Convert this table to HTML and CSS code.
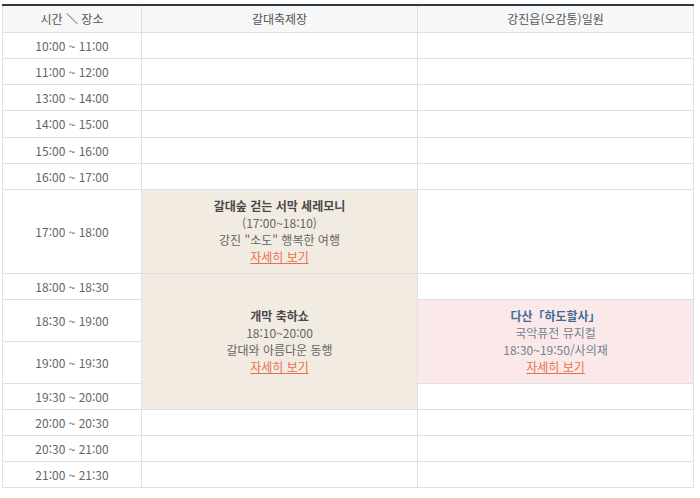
FILE: index.html
```html
<!DOCTYPE html>
<html lang="ko">
<head>
    <meta charset="UTF-8">
    <meta name="viewport" content="width=device-width, initial-scale=1.0">
    <title>행사 일정표</title>
    <link rel="stylesheet" href="styles.css">
</head>
<body>
    <table class="schedule">
        <colgroup>
            <col class="col-time">
            <col class="col-place">
            <col class="col-place">
        </colgroup>
        <thead>
            <tr>
                <th>시간 ＼ 장소</th>
                <th>갈대축제장</th>
                <th>강진읍(오감통)일원</th>
            </tr>
        </thead>
        <tbody>
            <tr><td class="time">10:00 ~ 11:00</td><td></td><td></td></tr>
            <tr><td class="time">11:00 ~ 12:00</td><td></td><td></td></tr>
            <tr><td class="time">13:00 ~ 14:00</td><td></td><td></td></tr>
            <tr class="plus"><td class="time">14:00 ~ 15:00</td><td></td><td></td></tr>
            <tr><td class="time">15:00 ~ 16:00</td><td></td><td></td></tr>
            <tr><td class="time">16:00 ~ 17:00</td><td></td><td></td></tr>
            <tr class="tall">
                <td class="time">17:00 ~ 18:00</td>
                <td class="event beige">
                    <strong>갈대숲 걷는 서막 세레모니</strong>
                    <span>(17:00~18:10)</span>
                    <span>강진 "소도" 행복한 여행</span>
                    <a href="#">자세히 보기</a>
                </td>
                <td></td>
            </tr>
            <tr>
                <td class="time">18:00 ~ 18:30</td>
                <td class="event beige" rowspan="4">
                    <strong>개막 축하쇼</strong>
                    <span>18:10~20:00</span>
                    <span>갈대와 아름다운 동행</span>
                    <a href="#">자세히 보기</a>
                </td>
                <td></td>
            </tr>
            <tr class="mid">
                <td class="time">18:30 ~ 19:00</td>
                <td class="event pink" rowspan="2">
                    <strong>다산「하도할사」</strong>
                    <span>국악퓨전 뮤지컬</span>
                    <span>18:30~19:50/사의재</span>
                    <a href="#">자세히 보기</a>
                </td>
            </tr>
            <tr class="mid"><td class="time">19:00 ~ 19:30</td></tr>
            <tr><td class="time">19:30 ~ 20:00</td><td></td></tr>
            <tr><td class="time">20:00 ~ 20:30</td><td></td><td></td></tr>
            <tr><td class="time">20:30 ~ 21:00</td><td></td><td></td></tr>
            <tr><td class="time">21:00 ~ 21:30</td><td></td><td></td></tr>
        </tbody>
    </table>
</body>
</html>
```

FILE: styles.css
```css
* {
    margin: 0;
    padding: 0;
    box-sizing: border-box;
}

body {
    padding: 4px 6px 0 2px;
    background: #fff;
    font-family: "Noto Sans CJK KR", "Noto Sans", sans-serif;
    font-size: 12px;
    color: #666;
}

.schedule {
    width: 692px;
    border-collapse: collapse;
    table-layout: fixed;
    border-top: 2px solid #2c3b48;
}

.col-time {
    width: 139px;
}

.schedule th,
.schedule td {
    border: 1px solid #e0e0e0;
    text-align: center;
    vertical-align: middle;
    height: 26px;
    line-height: 17px;
}

.schedule th {
    height: 27px;
    background: #f7f7f7;
    font-weight: normal;
    color: #555;
    border-top: none;
}

.schedule tr.plus td {
    height: 27px;
}

.schedule tr.tall td {
    height: 84px;
}

.schedule tr.mid td {
    height: 42px;
}

.event strong,
.event span,
.event a {
    display: block;
}

.event strong {
    font-weight: bold;
    color: #484848;
}

.event a {
    color: #e8714a;
    text-decoration: underline;
    width: fit-content;
    margin: 0 auto;
}

.beige {
    background: #f1ebe2;
}

.pink {
    background: #fbe9e9;
    color: #728292;
}

.pink strong {
    color: #3f6c97;
}
```
